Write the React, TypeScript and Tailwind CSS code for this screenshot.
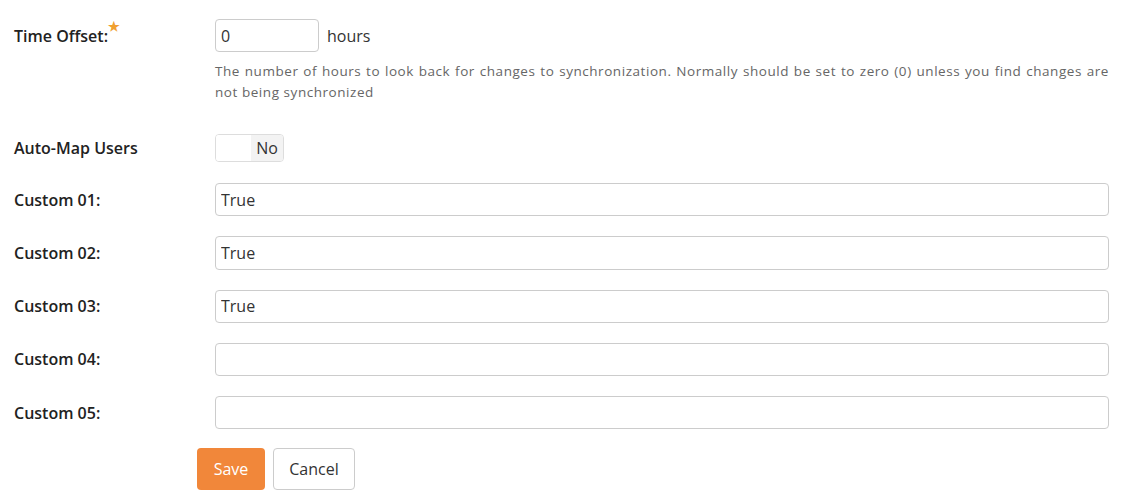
import React, { useState } from 'react';

const font = { fontFamily: '"Open Sans", "Noto Sans", sans-serif' };

const customFields = [
  { id: 'custom01', label: 'Custom 01:', value: 'True' },
  { id: 'custom02', label: 'Custom 02:', value: 'True' },
  { id: 'custom03', label: 'Custom 03:', value: 'True' },
  { id: 'custom04', label: 'Custom 04:', value: '' },
  { id: 'custom05', label: 'Custom 05:', value: '' },
];

const Label = ({ children, required }: { children: React.ReactNode; required?: boolean }) => (
  <div className="w-[201px] shrink-0 h-[33px] flex items-center text-[16px] font-semibold text-[#222]">
    <span className="relative">
      {children}
      {required && (
        <span className="absolute -right-[12px] -top-[7px] text-[13px] text-[#f0a030]">★</span>
      )}
    </span>
  </div>
);

const App = () => {
  const [offset, setOffset] = useState('0');
  const [autoMap, setAutoMap] = useState(false);
  const [values, setValues] = useState<Record<string, string>>(
    Object.fromEntries(customFields.map(f => [f.id, f.value]))
  );

  return (
    <div className="bg-white w-[1126px] h-[494px] pl-[14px] pr-[17px] pt-[19px]" style={font}>
      <div className="flex">
        <Label required>Time Offset:</Label>
        <div className="flex-1">
          <div className="flex items-center">
            <input
              className="w-[104px] h-[33px] border border-[#ccc] rounded-[4px] px-[5px] text-[16px] text-[#333] outline-none"
              value={offset}
              onChange={e => setOffset(e.target.value)}
            />
            <span className="ml-[8px] text-[16px] text-[#333]">hours</span>
          </div>
          <p className="mt-[9px] text-[13.5px] leading-[21px] tracking-[0.55px] text-[#666] text-justify">
            The number of hours to look back for changes to synchronization. Normally should be set to
            zero (0) unless you find changes are not being synchronized
          </p>
        </div>
      </div>

      <div className="flex mt-[31px]">
        <div className="w-[201px] shrink-0 h-[28px] flex items-center text-[16px] font-semibold text-[#222]">
          Auto-Map Users
        </div>
        <button
          type="button"
          onClick={() => setAutoMap(!autoMap)}
          className="flex w-[69px] h-[28px] border border-[#ddd] rounded-[4px] overflow-hidden"
        >
          <span className="w-[35px] h-full bg-white" />
          <span className="flex-1 h-full bg-[#f3f3f3] flex items-center justify-center text-[16px] text-[#333]">
            {autoMap ? 'Yes' : 'No'}
          </span>
        </button>
      </div>

      <div className="flex flex-col gap-[20px] mt-[21px]">
        {customFields.map(field => (
          <div className="flex" key={field.id}>
            <Label>{field.label}</Label>
            <input
              className="flex-1 h-[33.25px] border border-[#ccc] rounded-[4px] px-[5px] text-[16px] text-[#333] outline-none"
              value={values[field.id]}
              onChange={e => setValues({ ...values, [field.id]: e.target.value })}
            />
          </div>
        ))}
      </div>

      <div className="flex gap-[8px] mt-[19px] ml-[183px]">
        <button className="w-[68px] h-[42px] rounded-[4px] bg-[#f1873a] text-white text-[16px]">
          Save
        </button>
        <button className="w-[82px] h-[42px] rounded-[4px] border border-[#ccc] bg-white text-[#333] text-[16px]">
          Cancel
        </button>
      </div>
    </div>
  );
};

export default App;
